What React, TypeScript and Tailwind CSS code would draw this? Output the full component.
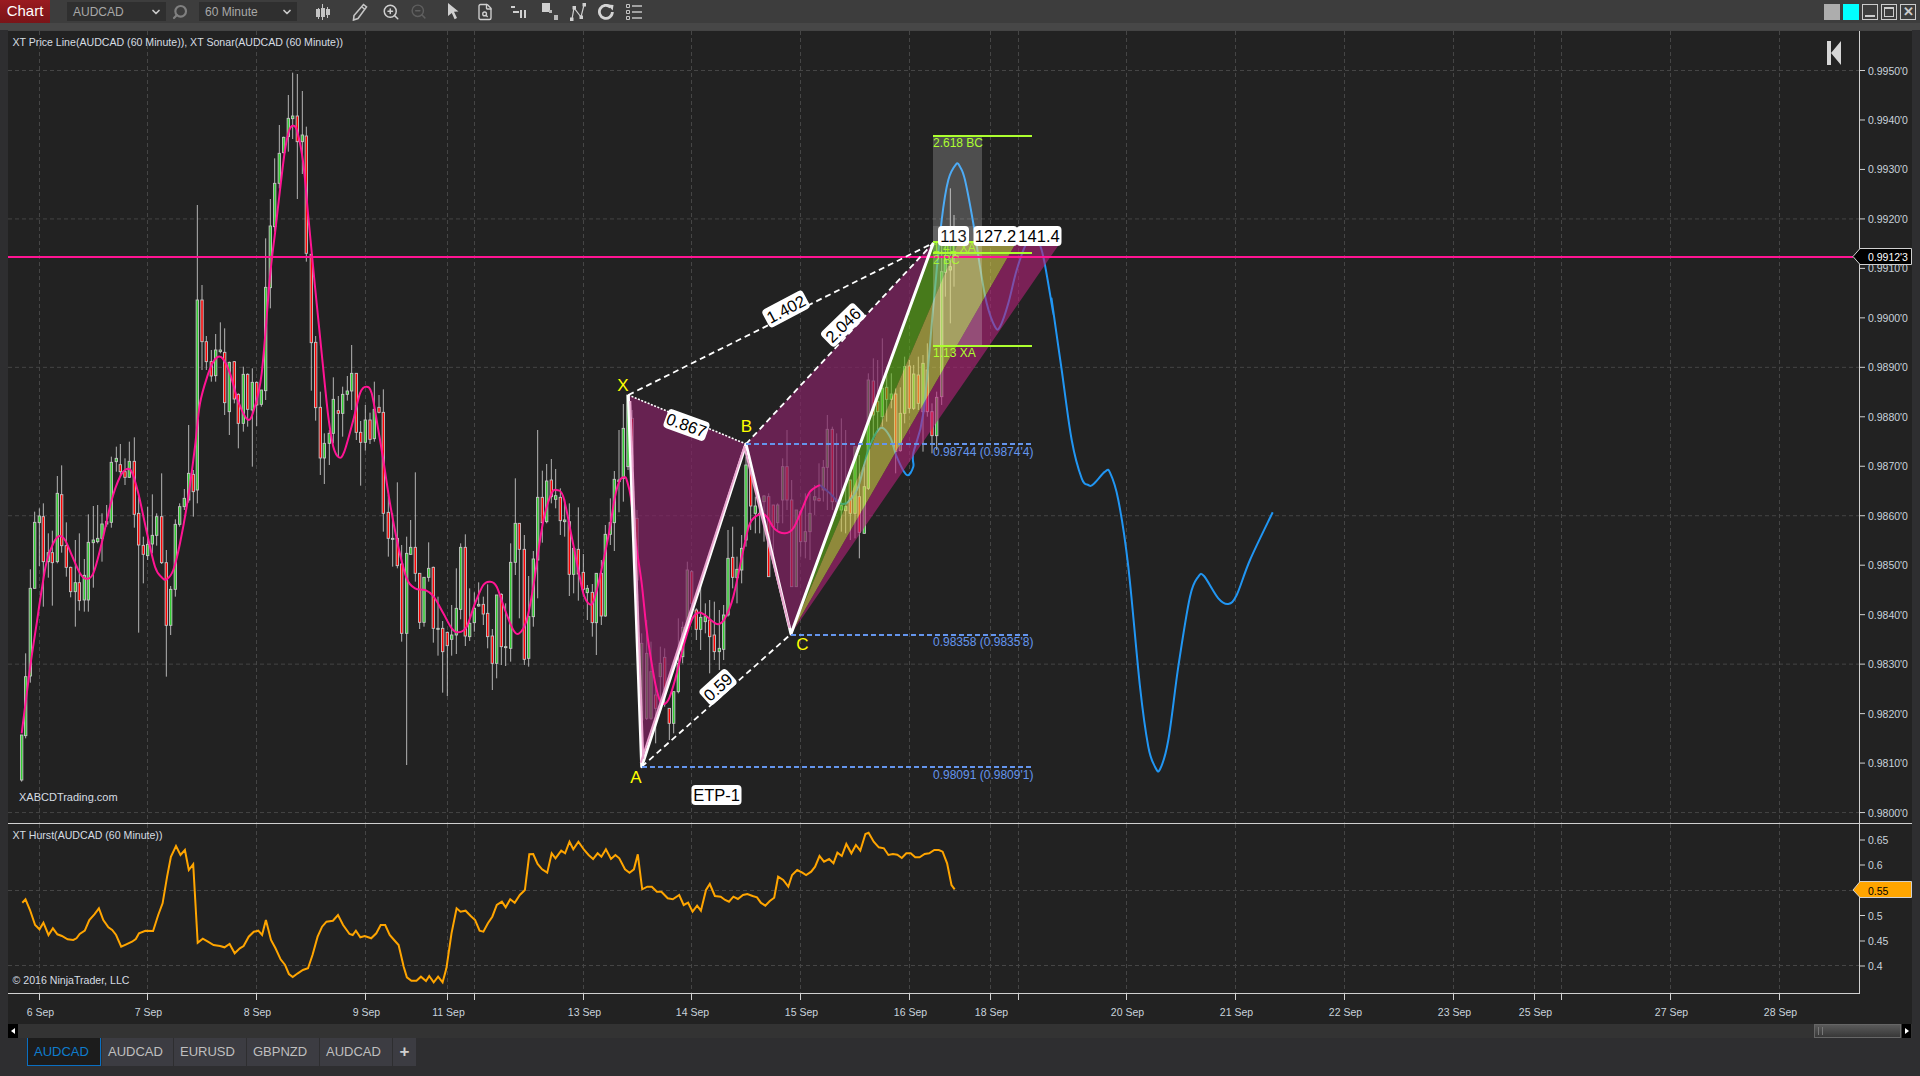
import { ChevronDown, FileSearch, Search, ZoomIn, ZoomOut } from 'lucide-react';

type Row = number[];

// wick top, body top, body bottom, wick bottom, 1 = up candle. Read off the chart per region.
const toCandles = (ox: number, oy: number, rows: Row[]) =>
  rows.map(([zx, wt, bt, bb, wb, up]) => ({
    x: ox + zx / 3,
    wt: oy + wt / 3,
    bt: oy + bt / 3,
    bb: oy + bb / 3,
    wb: oy + wb / 3,
    up,
  }));

const candles = [
  ...toCandles(0, 340, [
    [65, 1185, 1185, 1320, 1325, 1], [77, 940, 1010, 1187, 1195, 1], [91, 688, 745, 1008, 1028, 1], [104, 515, 547, 745, 745, 1],
    [118, 505, 528, 548, 678, 1], [130, 490, 530, 665, 800, 0], [145, 580, 638, 665, 713, 1], [157, 572, 638, 668, 797, 0],
    [172, 408, 460, 665, 670, 1], [185, 376, 464, 617, 638, 0], [199, 547, 617, 682, 710, 0], [212, 680, 682, 755, 772, 0],
    [226, 600, 728, 755, 860, 1], [238, 580, 728, 782, 812, 0], [253, 657, 706, 780, 815, 1], [265, 523, 607, 780, 815, 1],
    [280, 498, 600, 608, 743, 1], [293, 495, 595, 605, 610, 1], [306, 520, 552, 595, 665, 1], [320, 495, 545, 552, 560, 1],
    [334, 350, 367, 547, 563, 1], [349, 320, 355, 365, 395, 1], [361, 312, 374, 395, 410, 0], [375, 355, 395, 412, 435, 0],
    [388, 305, 364, 412, 414, 1], [403, 292, 364, 523, 563, 0], [416, 470, 520, 615, 878, 0], [430, 590, 616, 643, 730, 0],
    [443, 500, 613, 647, 660, 1], [457, 463, 586, 612, 640, 1], [470, 520, 530, 586, 617, 1], [485, 400, 530, 668, 672, 0],
    [499, 630, 668, 856, 1010, 0], [512, 738, 748, 856, 885, 1], [526, 538, 553, 748, 770, 1], [539, 490, 500, 553, 560, 1],
    [553, 447, 475, 500, 510, 1], [566, 255, 400, 480, 488, 1], [580, 390, 403, 455, 530, 0],
  ]),
  ...toCandles(0, 60, [
    [592, 435, 720, 1290, 1330, 1], [606, 675, 720, 845, 930, 0], [619, 828, 845, 905, 930, 0], [634, 870, 905, 948, 965, 0],
    [647, 822, 870, 947, 965, 1], [661, 787, 870, 875, 880, 1], [674, 805, 877, 1028, 1065, 0], [688, 905, 907, 1055, 1125, 1],
    [703, 903, 905, 1017, 1030, 0], [715, 1000, 1003, 1090, 1165, 0], [730, 920, 943, 1090, 1115, 1], [743, 940, 943, 1048, 1100, 0],
    [757, 925, 967, 1050, 1220, 1], [770, 965, 967, 1035, 1098, 0], [784, 990, 990, 1033, 1040, 1], [797, 535, 682, 992, 1020, 1],
    [811, 417, 498, 683, 745, 1], [824, 295, 370, 500, 515, 1], [838, 195, 280, 370, 385, 1], [851, 230, 232, 278, 280, 1],
    [865, 105, 175, 230, 275, 1], [878, 38, 168, 176, 237, 1], [892, 42, 168, 245, 417, 0], [907, 93, 225, 245, 342, 1],
    [919, 200, 228, 580, 605, 0], [934, 585, 583, 848, 992, 0], [947, 828, 847, 1043, 1082, 0], [961, 995, 1042, 1194, 1245, 0],
    [973, 1120, 1150, 1194, 1272, 1],
  ]),
  ...toCandles(300, 340, [
    [88, 270, 280, 310, 375, 1], [100, 112, 178, 280, 310, 1], [115, 168, 212, 220, 350, 0], [128, 140, 163, 220, 290, 1],
    [142, 108, 153, 163, 182, 1], [155, 15, 100, 153, 210, 1], [169, 100, 100, 277, 300, 0], [182, 243, 277, 307, 437, 0],
    [196, 195, 240, 307, 332, 1], [210, 218, 240, 298, 312, 0], [223, 125, 208, 296, 305, 1], [237, 165, 202, 217, 220, 0],
    [250, 148, 217, 520, 575, 0], [265, 465, 517, 595, 650, 0], [278, 520, 595, 597, 680, 1], [292, 427, 595, 677, 685, 0],
    [305, 615, 672, 880, 905, 0], [320, 590, 640, 880, 1275, 1], [332, 540, 622, 643, 645, 1], [346, 397, 622, 700, 725, 0],
    [359, 700, 700, 847, 867, 0], [372, 715, 712, 847, 860, 1], [386, 607, 685, 712, 725, 1], [400, 680, 682, 865, 908, 0],
    [414, 770, 865, 868, 947, 1], [428, 843, 865, 935, 1058, 0], [442, 875, 877, 917, 1068, 0], [455, 795, 885, 898, 947, 1],
    [469, 685, 805, 885, 942, 1], [482, 610, 622, 808, 838, 1], [496, 583, 622, 888, 918, 0], [509, 745, 850, 890, 903, 1],
    [523, 757, 805, 848, 875, 1], [536, 727, 793, 798, 800, 1], [550, 770, 793, 822, 855, 0], [563, 733, 820, 890, 925, 0],
    [577, 867, 888, 970, 1050, 0], [590, 765, 765, 970, 1015, 1], [604, 760, 763, 920, 975, 0], [617, 790, 920, 923, 978, 1],
    [632, 610, 667, 925, 965, 1], [646, 415, 550, 667, 705, 1], [658, 550, 550, 628, 835, 0], [673, 585, 628, 958, 975, 0],
    [686, 708, 830, 955, 980, 1], [700, 633, 657, 830, 860, 1], [713, 270, 472, 660, 775, 1], [727, 392, 472, 548, 608, 0],
    [740, 372, 423, 545, 550, 1], [754, 357, 420, 470, 490, 0], [767, 387, 467, 478, 505, 1], [781, 445, 472, 542, 585, 0],
    [794, 478, 540, 545, 590, 1], [808, 490, 545, 703, 768, 0], [821, 622, 625, 703, 760, 1], [835, 502, 628, 702, 782, 0],
    [850, 642, 697, 748, 770, 0], [862, 735, 745, 758, 840, 1], [877, 732, 757, 848, 890, 0], [889, 700, 700, 848, 945, 1],
    [904, 660, 700, 828, 855, 0], [916, 555, 583, 828, 830, 1], [931, 475, 548, 583, 615, 1], [943, 393, 418, 548, 633, 1],
    [957, 270, 420, 425, 517, 1],
  ]),
  ...toCandles(600, 370, [
    [70, 102, 175, 325, 395, 1], [84, 75, 75, 290, 300, 1], [97, 120, 145, 290, 400, 0], [111, 420, 445, 630, 720, 0],
    [125, 790, 820, 1050, 1150, 1], [140, 750, 850, 1045, 1050, 1], [153, 815, 905, 1045, 1050, 1], [167, 950, 975, 1015, 1120, 0],
    [181, 830, 880, 920, 1015, 1], [194, 835, 862, 960, 1010, 0], [208, 1015, 1015, 1060, 1110, 0], [221, 965, 965, 1060, 1090, 1],
    [235, 745, 880, 965, 970, 1], [248, 755, 772, 860, 880, 1], [262, 575, 600, 760, 770, 1], [275, 600, 605, 700, 740, 0],
    [289, 715, 720, 778, 810, 0], [302, 640, 742, 778, 840, 1], [316, 700, 740, 755, 790, 1], [329, 690, 750, 800, 910, 0],
    [343, 695, 795, 845, 870, 0], [358, 720, 835, 845, 900, 1], [371, 705, 735, 838, 870, 1], [384, 480, 565, 735, 740, 1],
    [398, 470, 562, 622, 655, 0], [411, 560, 598, 623, 700, 1], [425, 495, 535, 600, 640, 1], [438, 260, 285, 510, 530, 1],
    [452, 300, 300, 408, 480, 0], [466, 380, 408, 430, 490, 1], [479, 400, 430, 434, 490, 1], [492, 375, 378, 395, 515, 1],
    [506, 370, 380, 620, 620, 0], [520, 405, 405, 470, 560, 0], [533, 400, 405, 458, 480, 1], [548, 265, 290, 390, 460, 1],
    [561, 180, 290, 390, 420, 0], [575, 330, 390, 650, 650, 0], [589, 420, 420, 650, 650, 1], [602, 420, 425, 515, 560, 0],
    [616, 370, 485, 515, 565, 1], [630, 370, 430, 485, 570, 1], [644, 345, 380, 390, 435, 1], [657, 280, 385, 392, 395, 0],
    [670, 270, 292, 360, 395, 1],
  ]),
  ...toCandles(800, 300, [
    [82, 345, 388, 502, 630, 1], [97, 380, 388, 605, 630, 0], [110, 400, 600, 605, 630, 1], [124, 355, 617, 630, 695, 1],
    [137, 390, 620, 632, 700, 1], [151, 540, 540, 640, 720, 0], [165, 500, 440, 640, 715, 1], [178, 465, 590, 697, 775, 0],
    [193, 500, 560, 700, 700, 1], [205, 220, 240, 565, 570, 1], [220, 175, 243, 345, 420, 0], [233, 180, 305, 335, 395, 0],
    [247, 115, 265, 350, 380, 1], [260, 200, 262, 298, 365, 0], [274, 220, 282, 298, 325, 1], [287, 265, 282, 455, 520, 0],
    [301, 262, 340, 452, 455, 1], [314, 170, 200, 340, 370, 1], [328, 180, 198, 325, 340, 0], [341, 195, 222, 325, 330, 1],
    [355, 170, 225, 310, 330, 0], [369, 165, 190, 335, 455, 1], [382, 130, 210, 335, 350, 0], [396, 310, 335, 407, 460, 0],
    [410, 275, 292, 407, 450, 1],
  ]),
  ...toCandles(880, 120, [
    [185, 360, 455, 830, 855, 1], [196, 380, 420, 457, 530, 1], [211, 205, 440, 450, 610, 1], [222, 285, 400, 410, 500, 1],
  ]),
];

const pts = (ox: number, oy: number, sx: number, sy: number, list: Row[]) =>
  list.map(([x, y]) => [ox + x / sx, oy + y / sy]);

// catmull-rom through the points
const smooth = (p: number[][]) => {
  let d = `M${p[0][0].toFixed(1)} ${p[0][1].toFixed(1)}`;
  for (let i = 0; i < p.length - 1; i++) {
    const a = p[Math.max(i - 1, 0)];
    const b = p[i];
    const c = p[i + 1];
    const e = p[Math.min(i + 2, p.length - 1)];
    d += `C${(b[0] + (c[0] - a[0]) / 6).toFixed(1)} ${(b[1] + (c[1] - a[1]) / 6).toFixed(1)} ${(c[0] - (e[0] - b[0]) / 6).toFixed(1)} ${(c[1] - (e[1] - b[1]) / 6).toFixed(1)} ${c[0].toFixed(1)} ${c[1].toFixed(1)}`;
  }
  return d;
};

const pinkLine = [
  ...pts(0, 340, 3, 3, [[65, 1180], [90, 985], [110, 850], [125, 750], [140, 665], [160, 610], [178, 588], [195, 600], [215, 645], [240, 700], [258, 716], [280, 700], [305, 610], [335, 480], [360, 410], [378, 388], [395, 395], [415, 460], [440, 575], [465, 680], [485, 712], [500, 718], [520, 690], [540, 610], [565, 470], [585, 320], [600, 190], [625, 100], [640, 65], [655, 50], [670, 58], [690, 100], [715, 185], [742, 238], [760, 215], [785, 100]]),
  ...pts(0, 60, 3, 3, [[810, 650], [825, 520], [840, 390], [855, 270], [868, 210], [880, 197], [892, 215], [910, 310], [925, 470], [945, 680], [965, 880], [985, 1070], [1000, 1160], [1017, 1192]]),
  ...pts(300, 340, 3, 3, [[133, 335], [160, 240], [180, 160], [198, 140], [215, 160], [235, 270], [250, 360], [270, 490], [295, 620], [320, 715], [345, 745], [375, 750], [400, 768], [430, 820], [455, 865], [475, 877], [500, 860], [525, 790], [550, 735], [570, 725], [590, 740], [615, 810], [640, 870], [658, 880], [680, 840], [700, 740], [720, 600], [735, 520], [755, 460], [770, 450], [790, 470], [815, 590], [835, 690], [850, 760], [865, 790], [880, 785], [900, 710], [925, 590], [945, 470], [960, 420], [975, 412]]),
  ...pts(600, 370, 3, 3, [[80, 330], [92, 380], [105, 500], [125, 640], [140, 780], [155, 880], [170, 960], [185, 1000], [205, 990], [225, 930], [250, 830], [275, 750], [295, 728], [315, 735], [335, 752], [355, 763], [375, 745], [400, 680], [430, 540], [450, 460], [480, 432], [500, 440], [525, 478], [555, 490], [580, 475], [605, 420], [630, 365], [660, 345]]),
];

const blueLine = [
  ...pts(600, 370, 3, 3, [[660, 345], [690, 370], [720, 400], [745, 395], [775, 350], [805, 240], [840, 175], [870, 200], [890, 260], [920, 315], [940, 290]]),
  ...pts(880, 120, 3, 3, [[100, 1000], [130, 880], [160, 560], [185, 300], [205, 180], [228, 133], [240, 140], [255, 180], [280, 310], [300, 440], [320, 550], [345, 620], [360, 620], [385, 550], [410, 450], [440, 370], [470, 365], [490, 410], [520, 580]]),
  ...pts(800, 300, 3, 3, [[755, 0], [785, 210], [815, 420], [845, 535], [865, 555], [880, 553], [915, 515], [930, 518], [955, 600], [985, 800], [1020, 1160], [1045, 1340], [1065, 1400], [1080, 1408], [1105, 1320], [1135, 1100], [1170, 890], [1195, 830], [1212, 828], [1255, 895], [1285, 912], [1310, 885], [1350, 780], [1418, 637]]),
];

const hurstRaw: Row[] = [
  [35, 248], [40, 238], [47, 270], [55, 315], [62, 328], [68, 308], [76, 345], [83, 325], [90, 343], [97, 348], [106, 358], [115, 360], [120, 355], [125, 342], [133, 332], [140, 300], [148, 283], [155, 265], [162, 300], [170, 322], [176, 330], [182, 345], [190, 380], [198, 373], [207, 365], [213, 357], [218, 340], [228, 332], [240, 333], [248, 285], [255, 250], [262, 170], [268, 110], [276, 78], [283, 105], [290, 90], [296, 150], [303, 133], [310, 368], [318, 356], [326, 365], [335, 375], [345, 378], [352, 382], [360, 372], [368, 400], [376, 385], [382, 378], [390, 350], [398, 335], [405, 332], [411, 345], [417, 300], [425, 360], [432, 385], [440, 418], [447, 435], [453, 462], [459, 471], [467, 460], [475, 450], [483, 445], [490, 405], [498, 350], [505, 320], [512, 305], [522, 302], [530, 285], [538, 315], [548, 342], [553, 345], [558, 332], [565, 352], [572, 348], [582, 355], [590, 340], [597, 315], [604, 315], [611, 345], [618, 360], [625, 375], [633, 440], [638, 472], [645, 482], [653, 482], [660, 470], [668, 483], [673, 468], [680, 487], [687, 470], [694, 487], [700, 445], [708, 340], [716, 265], [722, 275], [730, 272], [738, 288], [745, 300], [752, 332], [758, 335], [765, 310], [772, 290], [779, 255], [787, 245], [793, 262], [800, 238], [807, 248], [815, 225], [823, 210], [830, 103], [836, 102], [843, 132], [850, 148], [858, 158], [865, 100], [871, 115], [880, 92], [886, 100], [893, 65], [899, 88], [907, 65], [916, 90], [923, 105], [930, 117], [937, 100], [943, 110], [950, 88], [958, 117], [965, 105], [971, 115], [980, 148], [987, 158], [994, 148], [1000, 103], [1007, 208], [1015, 200], [1022, 200], [1030, 215], [1037, 215], [1047, 235], [1055, 238], [1065, 225], [1072, 255], [1079, 248], [1086, 275], [1093, 257], [1099, 272], [1107, 210], [1113, 192], [1121, 228], [1130, 230], [1137, 240], [1143, 245], [1150, 230], [1157, 237], [1165, 225], [1172, 222], [1180, 228], [1187, 232], [1193, 248], [1200, 257], [1207, 243], [1214, 233], [1220, 170], [1228, 180], [1236, 200], [1242, 165], [1250, 150], [1258, 158], [1264, 165], [1272, 155], [1278, 140], [1285, 108], [1292, 125], [1300, 117], [1307, 130], [1313, 98], [1320, 108], [1327, 72], [1335, 100], [1342, 75], [1349, 92], [1357, 42], [1362, 38], [1370, 65], [1378, 82], [1386, 85], [1393, 105], [1400, 102], [1407, 104], [1414, 114], [1421, 100], [1428, 100], [1435, 112], [1442, 112], [1450, 102], [1457, 100], [1465, 90], [1472, 90], [1478, 95], [1485, 130], [1492, 195], [1497, 208],
];
const hurst = pts(0, 820, 1.568, 3, hurstRaw)
  .map((p) => p.map((v) => v.toFixed(1)).join(','))
  .join(' ');

const dayTicks: [number, string][] = [
  [39.5, '6 Sep'], [147.5, '7 Sep'], [256.5, '8 Sep'], [365.5, '9 Sep'], [447.5, '11 Sep'], [474.5, ''], [583.5, '13 Sep'],
  [691.5, '14 Sep'], [800.5, '15 Sep'], [909.5, '16 Sep'], [990.5, '18 Sep'], [1018.5, ''], [1126.5, '20 Sep'], [1235.5, '21 Sep'],
  [1344.5, '22 Sep'], [1453.5, '23 Sep'], [1534.5, '25 Sep'], [1561.5, ''], [1670.5, '27 Sep'], [1779.5, '28 Sep'],
];

const priceY = (n: number) => 70.5 + 49.47 * n;
const priceLabels = Array.from({ length: 16 }, (_, n) => (0.995 - n * 0.001).toFixed(4) + "'0");

const X = [628.3, 395];
const A = [641.7, 766.7];
const B = [746, 444];
const C = [791, 634];
const D = [933.3, 243];

const AXIS = '#c9d3dc';

function Tag({ x, y, w, angle, text }: { x: number; y: number; w: number; angle: number; text: string }) {
  return (
    <g transform={`translate(${x} ${y}) rotate(${angle})`}>
      <rect x={-w / 2} y={-10} width={w} height={20} rx={4} fill="#fff" />
      <text y={6} textAnchor="middle" fontSize={16.5} fill="#000">{text}</text>
    </g>
  );
}

function PricePane() {
  return (
    <svg viewBox="8 30 1904 793" className="block w-[1904px] h-[793px]">
      <rect x="8" y="30" width="1904" height="1" fill="#444" />
      {[0, 3, 6, 9, 12, 15].map((n) => (
        <line key={n} x1="8" x2="1859" y1={priceY(n)} y2={priceY(n)} stroke="#454545" strokeDasharray="4 3" />
      ))}
      {dayTicks.map(([x]) => (
        <line key={x} x1={x} x2={x} y1="31" y2="823" stroke="#454545" strokeDasharray="4 3" />
      ))}

      {candles.map((c, i) => (
        <g key={i}>
          <line x1={c.x} x2={c.x} y1={c.wt} y2={c.wb} stroke="#c4c4c4" strokeWidth="0.9" />
          <rect x={c.x - 1.2} y={c.bt} width="2.4" height={Math.max(c.bb - c.bt, 1)} fill={c.up ? '#32cd32' : '#ff0000'} stroke="#c4c4c4" strokeWidth="0.9" />
        </g>
      ))}

      <path d={smooth(blueLine)} fill="none" stroke="#2196f3" strokeWidth="2" />

      <polygon points={`${X} ${A} ${B}`} fill="#852265" fillOpacity="0.7" />
      <polygon points={`${B} ${C} ${D}`} fill="#852265" fillOpacity="0.7" />
      <polygon points={`${C} ${D} 958,243`} fill="#60b518" fillOpacity="0.6" />
      <polygon points={`${C} 958,243 1016,243`} fill="#d8cf4d" fillOpacity="0.6" />
      <polygon points={`${C} 1016,243 1060,243`} fill="#b5227a" fillOpacity="0.6" />
      <rect x="933" y="136" width="49" height="210" fill="#fff" fillOpacity="0.2" />

      <path d={smooth(pinkLine)} fill="none" stroke="#ff1493" strokeWidth="2" />
      <rect x="8" y="256" width="1845" height="2" fill="#ff1493" />

      <polyline points={`${X} ${A} ${B} ${C} ${D}`} fill="none" stroke="#fff" strokeWidth="3" strokeLinejoin="round" />
      <line x1={X[0] + 2} y1={X[1] + 6} x2={A[0] + 1.6} y2={A[1] - 8} stroke="#e9a6cf" strokeWidth="2" />
      <line x1={A[0] - 1} y1={A[1] - 4} x2={B[0] - 1.4} y2={B[1] + 2} stroke="#e9a6cf" strokeWidth="2" />
      <line x1={B[0] - 1.4} y1={B[1] + 4} x2={C[0] - 1.4} y2={C[1] - 6} stroke="#e9a6cf" strokeWidth="2" />
      <line x1={X[0]} y1={X[1]} x2={B[0]} y2={B[1]} stroke="#fff" strokeWidth="1.6" strokeDasharray="2 1.5" />
      <line x1={X[0]} y1={X[1]} x2={D[0]} y2={D[1]} stroke="#fff" strokeWidth="1.8" strokeDasharray="6 4" />
      <line x1={B[0]} y1={B[1]} x2={D[0]} y2={D[1]} stroke="#fff" strokeWidth="1.8" strokeDasharray="6 4" />
      <line x1={A[0]} y1={A[1]} x2={C[0]} y2={C[1]} stroke="#fff" strokeWidth="1.8" strokeDasharray="6 4" />

      {[[746, 444], [791, 635], [642, 767]].map(([x, y]) => (
        <line key={y} x1={x} x2="1031" y1={y} y2={y} stroke="#6495ed" strokeWidth="2" strokeDasharray="5 3" />
      ))}
      {[136, 242, 253, 346].map((y) => (
        <line key={y} x1="933" x2="1032" y1={y} y2={y} stroke="#adff2f" strokeWidth="2" />
      ))}

      <g fontSize="12" fill="#adff2f">
        <text x="933" y="147">2.618 BC</text>
        <text x="933" y="252" fillOpacity="0.85">1.41 XA</text>
        <text x="933" y="264" fillOpacity="0.85">2 BC</text>
        <text x="933" y="357">1.13 XA</text>
      </g>
      <g fontSize="12" fill="#6495ed">
        <text x="933" y="456">0.98744 (0.9874'4)</text>
        <text x="933" y="646">0.98358 (0.9835'8)</text>
        <text x="933" y="779">0.98091 (0.9809'1)</text>
      </g>
      <g fontSize="17" fill="#ffff00" textAnchor="middle">
        <text x="623" y="391">X</text>
        <text x="746.5" y="432">B</text>
        <text x="802.5" y="650">C</text>
        <text x="636" y="783">A</text>
      </g>

      <Tag x={786} y={309} w={46} angle={-28} text="1.402" />
      <Tag x={843} y={325} w={46} angle={-44} text="2.046" />
      <Tag x={686.5} y={425} w={44} angle={20} text="0.867" />
      <Tag x={718} y={687} w={36} angle={-42} text="0.59" />
      <Tag x={716.5} y={795} w={50} angle={0} text="ETP-1" />
      <Tag x={953.5} y={236} w={31} angle={0} text="113" />
      <Tag x={995.5} y={236} w={44} angle={0} text="127.2" />
      <Tag x={1039} y={236} w={45} angle={0} text="141.4" />
      <rect x="933" y="226" width="49" height="15" fill="#fff" fillOpacity="0.12" />

      <g fontSize="10.6" fill="#d6dde3">
        <text x="12.5" y="46">XT Price Line(AUDCAD (60 Minute)), XT Sonar(AUDCAD (60 Minute))</text>
      </g>
      <text x="19" y="801" fontSize="11" fill="#d6dde3">XABCDTrading.com</text>

      <path d="M1827 41h4v24h-4zM1841 41v24l-10-12z" fill="#d6d6d6" />

      <line x1="1859.5" x2="1859.5" y1="31" y2="823" stroke="#d0d0d0" />
      {priceLabels.map((label, n) => (
        <g key={label}>
          <line x1="1860" x2="1865" y1={priceY(n)} y2={priceY(n)} stroke="#d0d0d0" />
          <text x="1868" y={priceY(n) + 4} fontSize="10.5" fill={AXIS}>{label}</text>
        </g>
      ))}
      <polygon points="1853,256.5 1860,248.5 1911.5,248.5 1911.5,264.5 1860,264.5" fill="#000" stroke="#d0d0d0" />
      <text x="1868" y="261" fontSize="10.5" fill="#fff">0.9912'3</text>
    </svg>
  );
}

function HurstPane() {
  const ticks: [number, string][] = [[840, '0.65'], [865, '0.6'], [890.5, '0.55'], [915.5, '0.5'], [941, '0.45'], [966, '0.4']];
  return (
    <svg viewBox="8 823 1904 171" className="block w-[1904px] h-[171px]">
      <line x1="8" x2="1912" y1="823.5" y2="823.5" stroke="#d0d0d0" />
      {[890.5, 965.5].map((y) => (
        <line key={y} x1="8" x2="1859" y1={y} y2={y} stroke="#454545" strokeDasharray="4 3" />
      ))}
      {dayTicks.map(([x]) => (
        <line key={x} x1={x} x2={x} y1="824" y2="994" stroke="#454545" strokeDasharray="4 3" />
      ))}
      <polyline points={hurst} fill="none" stroke="#ffa500" strokeWidth="2" />
      <g fontSize="10.6" fill="#d6dde3">
        <text x="12.5" y="839">XT Hurst(AUDCAD (60 Minute))</text>
        <text x="12.5" y="984">© 2016 NinjaTrader, LLC</text>
      </g>
      <line x1="1859.5" x2="1859.5" y1="824" y2="994" stroke="#d0d0d0" />
      <line x1="8" x2="1860" y1="993.5" y2="993.5" stroke="#d0d0d0" />
      {ticks.map(([y, label]) => (
        <g key={label}>
          <line x1="1860" x2="1865" y1={y} y2={y} stroke="#d0d0d0" />
          <text x="1868" y={y + 4} fontSize="10.5" fill={AXIS}>{label}</text>
        </g>
      ))}
      <polygon points="1853,890 1860,881.5 1911.5,881.5 1911.5,897.5 1860,897.5" fill="#ffa500" stroke="#d0d0d0" />
      <text x="1868" y="894.5" fontSize="10.5" fill="#000">0.55</text>
    </svg>
  );
}

function TimeAxis() {
  return (
    <svg viewBox="8 994 1904 30" className="block w-[1904px] h-[30px]">
      {dayTicks.map(([x, label]) => (
        <g key={x}>
          <line x1={x} x2={x} y1="994" y2="1000" stroke="#d0d0d0" />
          {label && <text x={x + 1} y="1016" textAnchor="middle" fontSize="10.5" fill={AXIS}>{label}</text>}
        </g>
      ))}
    </svg>
  );
}

function CandleIcon() {
  return (
    <svg width="14" height="18" viewBox="0 0 14 18" fill="#c4c4c4">
      <path d="M2 5h1v1h1v8H3v2H2v-2H0V6h2zM6 1h1v4h2v9H7v3H6v-3H5V5h1zM11 4h1v2h2v6h-2v3h-1v-3h-1V6h1z" />
    </svg>
  );
}

function PencilIcon() {
  return (
    <svg width="16" height="18" viewBox="0 0 16 18" fill="none" stroke="#c4c4c4" strokeWidth="1.6">
      <path d="M11.5 1.5l3 2.5L6 15.5l-4.5 1.5.5-4.5z" />
      <path d="M10 4l3 2.5" />
    </svg>
  );
}

function ArrowIcon() {
  return (
    <svg width="11" height="17" viewBox="0 0 11 17" fill="#d0d0d0">
      <path d="M0 0l10.5 8.5-4.5.3 3 6.2-2.4 1.2-2.8-6.2L0 13z" />
    </svg>
  );
}

function BarsIcon() {
  return (
    <svg width="16" height="12" viewBox="0 0 16 12" fill="#d0d0d0">
      <path d="M0 0h4v2H0zM2 5h6v2H2zM9 4h2v8H9zM13 4h2v8h-2z" />
    </svg>
  );
}

function SquaresIcon() {
  return (
    <svg width="16" height="17" viewBox="0 0 16 17" fill="#d0d0d0">
      <path d="M0 0h8v9H0z" />
      <path d="M7 7h3v3H7zM12 12h4v5h-4z" fill="#b8b8b8" />
    </svg>
  );
}

function NodesIcon() {
  return (
    <svg width="16" height="18" viewBox="0 0 16 18" fill="none" stroke="#d0d0d0" strokeWidth="1.2">
      <path d="M2 16L4 5l7 9 3-12" />
      <g fill="#d0d0d0" stroke="none">
        <rect x="0" y="14.5" width="3.5" height="3.5" />
        <rect x="2.5" y="3" width="3.5" height="3.5" />
        <rect x="9.5" y="12.5" width="3.5" height="3.5" />
        <rect x="12.5" y="0" width="3.5" height="3.5" />
      </g>
    </svg>
  );
}

function RingIcon() {
  return (
    <svg width="16" height="16" viewBox="0 0 16 16" fill="none" stroke="#d4d4d4" strokeWidth="2.8">
      <path d="M12.5 3.2A6.5 6.5 0 1 0 14.4 8" />
      <path d="M9.5 .5l6 .5-.8 5.5z" fill="#d4d4d4" stroke="none" />
    </svg>
  );
}

function ListIcon() {
  return (
    <svg width="16" height="16" viewBox="0 0 16 16" fill="none" stroke="#c4c4c4">
      <path d="M.5.5h3v3h-3zM.5 6.5h3v3h-3zM.5 12.5h3v3h-3z" />
      <path d="M6 2h10M6 8h10M6 14h10" strokeWidth="1.6" />
    </svg>
  );
}

function Select({ label, className }: { label: string; className: string }) {
  return (
    <div className={`flex h-[19px] items-center justify-between bg-[#2f2f2f] pl-[6px] pr-[4px] text-[12px] text-[#a8a8a8] ${className}`}>
      <span>{label}</span>
      <ChevronDown size={12} strokeWidth={3.5} className="text-[#c8c8c8]" />
    </div>
  );
}

function Toolbar() {
  return (
    <div className="h-[30px] shrink-0 bg-[#474747]">
      <div className="flex h-[23px] items-center bg-[#3d3d3d]">
        <div className="flex h-[23px] w-[50px] items-center justify-center bg-gradient-to-b from-[#9a1b20] to-[#7a1418] text-[15px] text-white">Chart</div>
        <Select label="AUDCAD" className="ml-[17px] w-[99px]" />
        <Search size={16} strokeWidth={3.2} className="ml-[6px] -scale-x-100 text-[#808080]" />
        <Select label="60 Minute" className="ml-[11px] w-[98px]" />
        <div className="ml-[19px] flex items-center"><CandleIcon /></div>
        <div className="ml-[22px] flex items-center"><PencilIcon /></div>
        <ZoomIn size={18} strokeWidth={2} className="ml-[14px] text-[#d0d0d0]" />
        <ZoomOut size={17} strokeWidth={2} className="ml-[10px] text-[#5f5f5f]" />
        <div className="ml-[21px] flex items-center"><ArrowIcon /></div>
        <FileSearch size={18} strokeWidth={1.8} className="ml-[17px] text-[#d0d0d0]" />
        <div className="ml-[17px] flex items-center"><BarsIcon /></div>
        <div className="ml-[15px] flex items-center"><SquaresIcon /></div>
        <div className="ml-[12px] flex items-center"><NodesIcon /></div>
        <div className="ml-[12px] flex items-center"><RingIcon /></div>
        <div className="ml-[12px] flex items-center"><ListIcon /></div>
        <div className="ml-auto mr-[4px] flex items-center gap-[3px]">
          <div className="h-[16px] w-[16px] bg-[#adadad]" />
          <div className="h-[16px] w-[16px] bg-[#00ffff]" />
          <div className="flex h-[16px] w-[16px] items-end justify-center border border-[#ccc] pb-[2px]">
            <div className="h-[2px] w-[10px] bg-[#ccc]" />
          </div>
          <div className="h-[16px] w-[16px] border border-[#ccc] p-[2px]">
            <div className="h-full w-full border border-t-2 border-[#ccc]" />
          </div>
          <div className="flex h-[16px] w-[16px] items-center justify-center border border-[#ccc] text-[13px] font-bold leading-none text-[#ccc]">✕</div>
        </div>
      </div>
    </div>
  );
}

function Scrollbar() {
  return (
    <div className="flex h-[14px] items-stretch bg-[#333]">
      <div className="flex w-[10px] items-center justify-center bg-black">
        <div className="h-0 w-0 border-y-[3px] border-r-[4px] border-y-transparent border-r-white" />
      </div>
      <div className="flex-1" />
      <div className="flex w-[87px] items-center gap-[3px] border border-[#666] bg-gradient-to-b from-[#5a5a5a] to-[#383838] pl-[3px]">
        <div className="h-[8px] w-px bg-[#777]" />
        <div className="h-[8px] w-px bg-[#777]" />
      </div>
      <div className="ml-[1px] flex w-[9px] items-center justify-center bg-black">
        <div className="h-0 w-0 border-y-[3px] border-l-[4px] border-y-transparent border-l-white" />
      </div>
      <div className="w-[1px]" />
    </div>
  );
}

function Tabs() {
  const tabs: [string, string][] = [['AUDCAD', 'w-[71px]'], ['EURUSD', 'w-[72px]'], ['GBPNZD', 'w-[72px]'], ['AUDCAD', 'w-[72px]']];
  return (
    <div className="flex h-[28px] shrink-0 gap-[1px] pl-[27px] text-[13px]">
      <div className="flex w-[74px] items-center border-x border-b border-[#0a6fc2] bg-[#1c1c1c] pl-[6px] text-[#0f7ccc]">AUDCAD</div>
      {tabs.map(([name, w], i) => (
        <div key={i} className={`flex items-center bg-[#3c3c42] pl-[6px] text-[#bfbfbf] ${w}`}>{name}</div>
      ))}
      <div className="flex w-[23px] items-center justify-center bg-[#3c3c42] text-[17px] font-bold text-[#d0d0d0]">+</div>
    </div>
  );
}

export default function App() {
  return (
    <div className="flex h-[1076px] w-[1920px] flex-col overflow-hidden bg-[#2e2e30] font-['Liberation_Sans',Arial,sans-serif]">
      <Toolbar />
      <div className="ml-[8px] w-[1904px] bg-[#222222]">
        <PricePane />
        <HurstPane />
        <TimeAxis />
        <Scrollbar />
      </div>
      <Tabs />
    </div>
  );
}
